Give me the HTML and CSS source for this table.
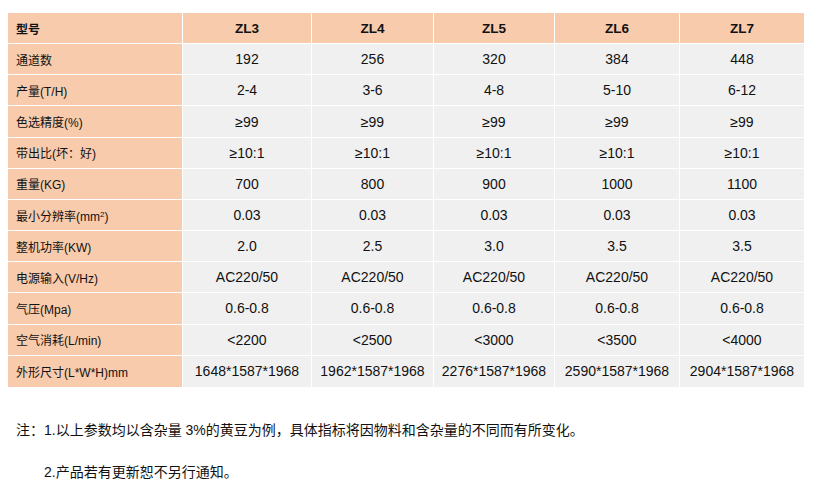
FILE: index.html
```html
<!DOCTYPE html>
<html lang="zh-CN">
<head>
<meta charset="utf-8">
<title>参数</title>
<link rel="stylesheet" href="styles.css">
</head>
<body>
<div class="page">
<table class="spec">
<colgroup>
<col class="c0"><col class="c1"><col class="c2"><col class="c3"><col class="c4"><col class="c5">
</colgroup>
<thead>
<tr><th class="label">型号</th><th>ZL3</th><th>ZL4</th><th>ZL5</th><th>ZL6</th><th>ZL7</th></tr>
</thead>
<tbody>
<tr><th class="label">通道数</th><td>192</td><td>256</td><td>320</td><td>384</td><td>448</td></tr>
<tr><th class="label">产量(T/H)</th><td>2-4</td><td>3-6</td><td>4-8</td><td>5-10</td><td>6-12</td></tr>
<tr><th class="label">色选精度(%)</th><td>≥99</td><td>≥99</td><td>≥99</td><td>≥99</td><td>≥99</td></tr>
<tr><th class="label">带出比(坏：好)</th><td>≥10:1</td><td>≥10:1</td><td>≥10:1</td><td>≥10:1</td><td>≥10:1</td></tr>
<tr><th class="label">重量(KG)</th><td>700</td><td>800</td><td>900</td><td>1000</td><td>1100</td></tr>
<tr><th class="label">最小分辨率(mm<sup>2</sup>)</th><td>0.03</td><td>0.03</td><td>0.03</td><td>0.03</td><td>0.03</td></tr>
<tr><th class="label">整机功率(KW)</th><td>2.0</td><td>2.5</td><td>3.0</td><td>3.5</td><td>3.5</td></tr>
<tr><th class="label">电源输入(V/Hz)</th><td>AC220/50</td><td>AC220/50</td><td>AC220/50</td><td>AC220/50</td><td>AC220/50</td></tr>
<tr><th class="label">气压(Mpa)</th><td>0.6-0.8</td><td>0.6-0.8</td><td>0.6-0.8</td><td>0.6-0.8</td><td>0.6-0.8</td></tr>
<tr><th class="label">空气消耗(L/min)</th><td>&lt;2200</td><td>&lt;2500</td><td>&lt;3000</td><td>&lt;3500</td><td>&lt;4000</td></tr>
<tr><th class="label">外形尺寸(L*W*H)mm</th><td>1648*1587*1968</td><td>1962*1587*1968</td><td>2276*1587*1968</td><td>2590*1587*1968</td><td>2904*1587*1968</td></tr>
</tbody>
</table>
<div class="notes">
<p>注：1.以上参数均以含杂量 3%的黄豆为例，具体指标将因物料和含杂量的不同而有所变化。</p>
<p class="indent">2.产品若有更新恕不另行通知。</p>
</div>
</div>
</body>
</html>
```
FILE: styles.css
```css
html, body {
  margin: 0;
  padding: 0;
  background: #fff;
}
.page {
  padding: 13px 0 0 8px;
  font-family: "Liberation Sans", "Noto Sans CJK SC", sans-serif;
  color: #111;
}
.spec {
  border-collapse: separate;
  border-spacing: 0;
  table-layout: fixed;
  width: 796px;
}
.c0 { width: 175px; }
.c1 { width: 129px; }
.c2 { width: 122px; }
.c3 { width: 121px; }
.c4 { width: 125px; }
.c5 { width: 124px; }
.spec th, .spec td {
  box-sizing: border-box;
  height: 31.17px;
  padding: 0;
  border-right: 1px solid #fff;
  border-bottom: 1px solid #fff;
  vertical-align: middle;
  text-align: center;
  white-space: nowrap;
  font-size: 14px;
  font-weight: normal;
  background: #f0f0f0;
}
.spec tr > :last-child { border-right: none; }
.spec tbody tr:last-child > * { border-bottom: none; }
.spec thead th {
  background: #f8cbad;
  font-weight: bold;
  font-size: 13.5px;
}
.spec th.label {
  background: #f8cbad;
  text-align: left;
  padding-left: 8px;
  font-size: 12px;
}
.spec thead th.label {
  font-weight: bold;
  font-size: 12px;
}
.spec sup {
  font-size: 8px;
  vertical-align: 4px;
  line-height: 0;
}
.notes {
  margin-top: 22px;
  font-size: 14px;
}
.notes p {
  margin: 0;
  padding-left: 8px;
  line-height: 42px;
}
.notes p.indent {
  padding-left: 36px;
}
```
